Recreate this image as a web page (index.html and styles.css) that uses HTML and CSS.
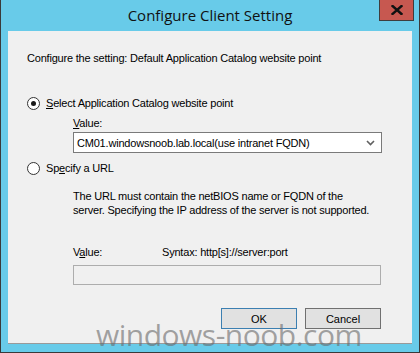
FILE: index.html
```html
<!DOCTYPE html>
<html>
<head>
<meta charset="utf-8">
<link rel="stylesheet" href="styles.css">
</head>
<body>
<div class="window">
  <div class="titlebar">
    <span class="title">Configure Client Setting</span>
    <div class="close"><svg width="12" height="10" viewBox="0 0 12 10"><path d="M1.5 1 L10.5 9 M10.5 1 L1.5 9" stroke="#111" stroke-width="2.4" stroke-linecap="square"/></svg></div>
  </div>
  <div class="client">
    <div class="intro">Configure the setting: Default Application Catalog website point</div>
    <div class="radio-row first">
      <span class="radio checked"></span>
      <span class="label"><u>S</u>elect Application Catalog website point</span>
    </div>
    <div class="indent value-label"><u>V</u>alue:</div>
    <div class="indent combo">
      <span class="combo-text">CM01.windowsnoob.lab.local(use intranet FQDN)</span>
      <svg class="chevron" width="9" height="6" viewBox="0 0 9 6"><path d="M1 1 L4.5 4.5 L8 1" fill="none" stroke="#606060" stroke-width="1.6"/></svg>
    </div>
    <div class="radio-row second">
      <span class="radio"></span>
      <span class="label">Sp<u>e</u>cify a URL</span>
    </div>
    <div class="indent para">The URL must contain the netBIOS name or FQDN of the<br>server. Specifying the IP address of the server is not supported.</div>
    <div class="indent syntax-row">
      <span class="syntax-label">V<u>a</u>lue:</span>
      <span>Syntax: http[s]://server:port</span>
    </div>
    <div class="indent textfield"></div>
    <div class="buttons">
      <div class="btn default">OK</div>
      <div class="btn">Cancel</div>
    </div>
  </div>
  <div class="watermark">windows-noob.com</div>
</div>
</body>
</html>
```
FILE: styles.css
```css
* { box-sizing: border-box; }
html, body { margin: 0; padding: 0; }
body { width: 420px; height: 353px; overflow: hidden; font-family: "Liberation Sans", Arial, sans-serif; }

.window {
  position: relative;
  width: 420px;
  height: 353px;
  background: #68cbe9;
  border: 1px solid #3a3a3a;
  border-top: none;
  padding: 0 7px 8px 7px;
  display: flex;
  flex-direction: column;
  overflow: hidden;
}

.titlebar {
  height: 31px;
  display: flex;
  align-items: center;
  justify-content: center;
  flex: none;
}
.title {
  font-family: "Open Sans", "Noto Sans", sans-serif;
  font-size: 15px;
  color: #111;
  margin-top: -1px;
}
.close {
  position: absolute;
  top: 0;
  right: 5px;
  width: 35px;
  height: 21px;
  background: #c75850;
  border: 1px solid #3e3e3e;
  border-top: none;
  display: flex;
  align-items: center;
  justify-content: center;
}

.client {
  flex: 1;
  background: #f0f0f0;
  border-bottom: 1px solid #9a9a9a;
  padding: 20px 0 0 19px;
  display: flex;
  flex-direction: column;
  font-size: 11px;
  line-height: 14px;
  letter-spacing: -0.2px;
  color: #000;
}

.intro { height: 14px; }

.radio-row {
  display: flex;
  align-items: center;
  height: 14px;
}
.radio-row.first { margin-top: 31px; }
.radio-row.second { margin-top: 8px; }
.radio {
  width: 13px;
  height: 13px;
  border-radius: 50%;
  border: 1px solid #333;
  background: #fff;
  display: flex;
  align-items: center;
  justify-content: center;
  margin-right: 6px;
}
.radio.checked::after {
  content: "";
  width: 5px;
  height: 5px;
  border-radius: 50%;
  background: #1a1a1a;
}

.indent { margin-left: 46px; }

.value-label { margin-top: 6px; height: 14px; }

.combo {
  margin-top: 2px;
  width: 309px;
  height: 21px;
  background: #fff;
  border: 1px solid #7a7a7a;
  display: flex;
  align-items: center;
  justify-content: space-between;
  padding: 0 6px 0 3px;
}
.chevron { flex: none; }

.para { margin-top: 14px; }

.syntax-row {
  margin-top: 28px;
  display: flex;
  height: 14px;
}
.syntax-label { width: 89px; }

.textfield {
  margin-top: 6px;
  width: 308px;
  height: 20px;
  border: 1px solid #adadad;
  background: #f0f0f0;
}

.buttons {
  margin-top: 23px;
  display: flex;
  gap: 8px;
  margin-left: 194px;
}
.btn {
  width: 76px;
  height: 21px;
  background: #e1e1e1;
  border: 1px solid #707070;
  display: flex;
  align-items: center;
  justify-content: center;
  font-size: 11px;
  letter-spacing: 0;
}
.btn.default { border-color: #3c7fb1; }

.watermark {
  position: absolute;
  left: 95px;
  top: 320px;
  font-family: "Open Sans", "Noto Sans", sans-serif;
  font-size: 30px;
  line-height: 30px;
  letter-spacing: -0.5px;
  color: rgba(105, 105, 105, 0.6);
  white-space: nowrap;
}
```
